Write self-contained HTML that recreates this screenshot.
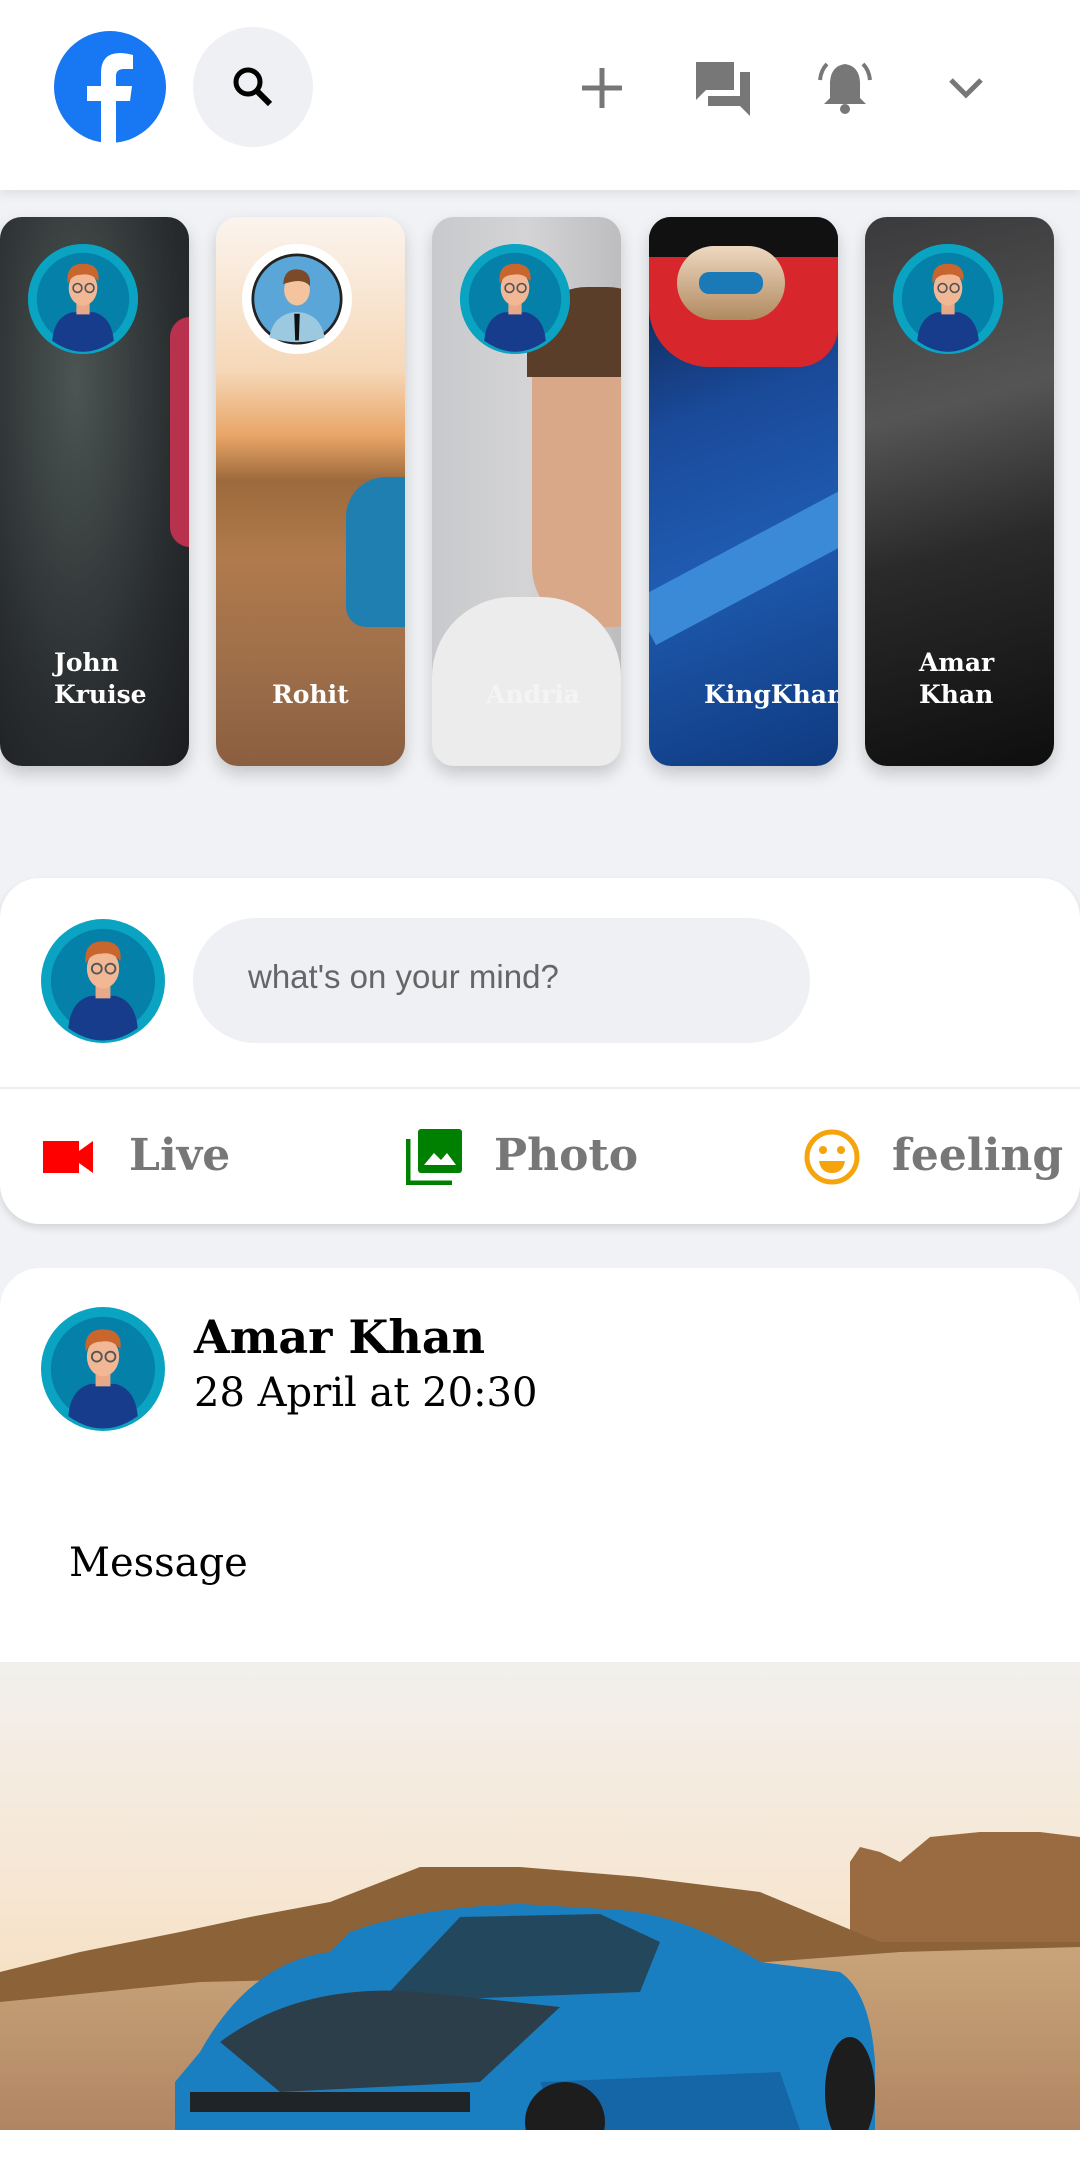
<!DOCTYPE html>
<html><head><meta charset="utf-8"><style>
*{margin:0;padding:0;box-sizing:border-box}
body{width:1080px;height:2130px;background:#f0f2f5;overflow:hidden;position:relative;font-family:"Liberation Serif","DejaVu Serif",serif}
.abs{position:absolute}
.header{left:0;top:0;width:1080px;height:190px;background:#fff;box-shadow:0 4px 10px rgba(0,0,0,.08)}
.story{top:217px;width:189px;height:549px;border-radius:22px;overflow:hidden;box-shadow:0 8px 16px rgba(0,0,0,.18)}
.sav{position:absolute;left:28px;top:27px;width:110px;height:110px;border-radius:50%;background:#0aa3c2;overflow:hidden}
.name{position:absolute;left:54px;color:#fff;font-weight:bold;font-size:28px;line-height:32px;font-family:"DejaVu Serif","Liberation Serif",serif;font-size:25px}
.card{left:0;width:1080px;background:#fff;border-radius:40px 40px 40px 40px}
.act{position:absolute;top:1130px;font-weight:bold;color:#777;font-size:44px;font-family:"DejaVu Serif",serif}
</style></head><body>
<svg width="0" height="0" style="position:absolute"><defs>
<g id="av">
<circle cx="50" cy="50" r="50" fill="#0aa3c2"/>
<circle cx="50" cy="50" r="42" fill="#0580a8"/>
<path d="M22 88 Q24 66 40 62 L60 62 Q76 66 78 88 Q64 98 50 98 Q36 98 22 88Z" fill="#173c8c"/>
<rect x="44" y="50" width="12" height="14" fill="#e8a988"/>
<ellipse cx="50" cy="40" rx="13" ry="16" fill="#f2b795"/>
<path d="M36 36 Q34 18 50 18 Q66 18 64 34 Q58 26 48 28 Q40 28 36 36Z" fill="#c9662e"/>
<circle cx="45" cy="40" r="4" fill="none" stroke="#555" stroke-width="1.5"/><circle cx="56" cy="40" r="4" fill="none" stroke="#555" stroke-width="1.5"/>
</g></defs></svg>

<div class="abs header">
 <svg class="abs" style="left:54px;top:31px" width="112" height="112" viewBox="0 0 112 112"><circle cx="56" cy="56" r="56" fill="#1877f2"/><path d="M62 112 V70 H76 L78 55 H62 V45 Q62 38 70 38 H79 V24 Q72 22 66 22 Q47 22 47 42 V55 H33 V70 H47 V112Z" fill="#fff"/></svg>
 <div class="abs" style="left:193px;top:27px;width:120px;height:120px;border-radius:50%;background:#eef0f3"></div>
 <svg class="abs" style="left:226px;top:60px" width="56" height="56" viewBox="0 0 56 56"><circle cx="22" cy="22" r="12" fill="none" stroke="#000" stroke-width="5"/><path d="M31 31 L44 44" stroke="#000" stroke-width="6"/></svg>
 <svg class="abs" style="left:580px;top:66px" width="44" height="44"><path d="M22 2V42M2 22H42" stroke="#777" stroke-width="5"/></svg>
 <svg class="abs" style="left:694px;top:60px" width="60" height="58" viewBox="0 0 60 58"><path d="M2 2H40V30H12L2 40Z" fill="#777"/><path d="M46 12H56V56L46 46H14V36H46Z" fill="#777"/></svg>
 <svg class="abs" style="left:815px;top:58px" width="60" height="60" viewBox="0 0 60 60"><path d="M30 6Q16 8 15 24V40L9 46H51L45 40V24Q44 8 30 6Z" fill="#777"/><circle cx="30" cy="51" r="5" fill="#777"/><path d="M12 6Q6 12 5 22M48 6Q54 12 55 22" stroke="#777" stroke-width="4" fill="none"/></svg>
 <svg class="abs" style="left:948px;top:76px" width="36" height="24"><path d="M3 4L18 19L33 4" stroke="#777" stroke-width="5" fill="none"/></svg>
</div>

<div class="abs story" style="left:0;background:radial-gradient(ellipse at 40% 30%,#4b5553,#2a2e30 60%,#1b1c1f)">
 <div class="abs" style="left:170px;top:100px;width:40px;height:230px;background:#b8324e;border-radius:30px"></div>
 <svg class="sav" viewBox="0 0 100 100"><use href="#av"/></svg>
 <div class="name" style="top:430px">John<br>Kruise</div>
</div>
<div class="abs story" style="left:216px;background:linear-gradient(180deg,#fbf4ee 0%,#f6d8b8 28%,#e8a466 40%,#9c6a3c 48%,#b07a4c 62%,#a0704a 80%,#8a5e40 100%)">
 <div class="abs" style="left:130px;top:260px;width:90px;height:150px;background:#1f7fb0;border-radius:40px 0 0 20px"></div>
 <div class="abs" style="left:26px;top:27px;width:110px;height:110px;border-radius:50%;background:#fff"></div>
 <svg class="abs" style="left:35px;top:36px" width="92" height="92" viewBox="0 0 100 100"><circle cx="50" cy="50" r="48" fill="#5aa6d8" stroke="#222" stroke-width="3"/><path d="M20 92Q24 66 50 64Q76 66 80 92Q50 102 20 92Z" fill="#9cc8e0"/><path d="M47 66H53L52 95H48Z" fill="#111"/><ellipse cx="50" cy="40" rx="14" ry="17" fill="#f3c49e"/><path d="M35 34Q36 16 52 18Q66 20 64 36Q56 26 35 34Z" fill="#7a4a2a"/></svg>
 <div class="name" style="top:462px;left:56px">Rohit</div>
</div>
<div class="abs story" style="left:432px;background:linear-gradient(90deg,#c8c9cc,#d4d4d6 50%,#bdbdbf)">
 <div class="abs" style="left:100px;top:90px;width:140px;height:320px;border-radius:60px;background:#d8a888"></div>
 <div class="abs" style="left:95px;top:70px;width:140px;height:90px;border-radius:60px 60px 0 0;background:#5a3e2a"></div>
 <div class="abs" style="left:0;top:380px;width:189px;height:170px;border-radius:80px 80px 0 0;background:#ececec"></div>
 <svg class="sav" viewBox="0 0 100 100"><use href="#av"/></svg>
 <div class="name" style="top:462px;left:54px;color:#f4f4f4">Andria</div>
</div>
<div class="abs story" style="left:649px;background:linear-gradient(160deg,#0a1a3a 0%,#1a4a9a 35%,#1f5bb0 60%,#0f3a80 100%)">
 <div class="abs" style="left:0;top:40px;width:189px;height:110px;background:#d8272c;border-radius:0 0 40px 60px"></div>
 <div class="abs" style="left:0;top:0;width:189px;height:40px;background:#111"></div>
 <div class="abs" style="left:-20px;top:320px;width:260px;height:50px;background:#3a8ad8;transform:rotate(-28deg)"></div>
 <div class="abs" style="left:28px;top:29px;width:108px;height:74px;border-radius:40px;background:linear-gradient(#eed8c0,#b08a60);overflow:hidden"><div class="abs" style="left:22px;top:26px;width:64px;height:22px;border-radius:10px;background:#1a7ab8"></div></div>
 <div class="name" style="top:462px;left:55px">KingKhan</div>
</div>
<div class="abs story" style="left:865px;background:linear-gradient(165deg,#3a3a3c 0%,#555 35%,#2a2a2a 60%,#0e0e0e 100%)">
 <svg class="sav" viewBox="0 0 100 100"><use href="#av"/></svg>
 <div class="name" style="top:430px;left:54px">Amar<br>Khan</div>
</div>

<div class="abs card" style="top:878px;height:346px;box-shadow:0 4px 8px rgba(0,0,0,.12)"></div>
<svg class="abs" style="left:41px;top:919px" width="124" height="124" viewBox="0 0 100 100"><use href="#av"/></svg>
<div class="abs" style="left:193px;top:918px;width:617px;height:125px;border-radius:63px;background:#eef0f3"></div>
<div class="abs" style="left:248px;top:958px;font-family:'Liberation Sans',sans-serif;font-size:33px;color:#666">what's on your mind?</div>
<div class="abs" style="left:0;top:1087px;width:1080px;height:2px;background:#eee"></div>
<svg class="abs" style="left:43px;top:1141px" width="52" height="32"><path d="M0 0H36V32H0Z" fill="#f00"/><path d="M36 10L50 0V32L36 22Z" fill="#f00"/></svg>
<div class="act" style="left:129px">Live</div>
<svg class="abs" style="left:406px;top:1129px" width="56" height="56" viewBox="0 0 56 56"><rect x="12" y="0" width="44" height="44" rx="3" fill="#008000"/><path d="M2 10V54H46" stroke="#008000" stroke-width="5" fill="none"/><path d="M18 36L28 24L35 31L41 24L50 36Z" fill="#fff"/></svg>
<div class="act" style="left:494px">Photo</div>
<svg class="abs" style="left:803px;top:1128px" width="58" height="58" viewBox="0 0 58 58"><circle cx="29" cy="29" r="25" fill="none" stroke="#f5a40c" stroke-width="5"/><circle cx="20" cy="22" r="4" fill="#f5a40c"/><circle cx="38" cy="22" r="4" fill="#f5a40c"/><path d="M16 33H42Q40 45 29 45Q18 45 16 33Z" fill="#f5a40c"/></svg>
<div class="act" style="left:892px">feeling</div>

<div class="abs" style="left:0;top:1268px;width:1080px;height:900px;background:#fff;border-radius:40px 40px 0 0"></div>
<svg class="abs" style="left:41px;top:1307px" width="124" height="124" viewBox="0 0 100 100"><use href="#av"/></svg>
<div class="abs" style="left:194px;top:1310px;font-family:'DejaVu Serif',serif;font-weight:bold;font-size:46px;color:#000">Amar Khan</div>
<div class="abs" style="left:194px;top:1370px;font-family:'DejaVu Serif',serif;font-size:40px;color:#000">28 April at 20:30</div>
<div class="abs" style="left:69px;top:1540px;font-family:'DejaVu Serif',serif;font-size:40px;color:#000">Message</div>

<svg class="abs" style="left:0;top:1662px" width="1080" height="468" viewBox="0 0 1080 468">
<defs><linearGradient id="sky" x1="0" y1="0" x2="0" y2="1"><stop offset="0" stop-color="#f2f0ed"/><stop offset=".5" stop-color="#f6e6d2"/><stop offset="1" stop-color="#f5d6a8"/></linearGradient>
<linearGradient id="gr" x1="0" y1="0" x2="0" y2="1"><stop offset="0" stop-color="#c9a47a"/><stop offset="1" stop-color="#b08662"/></linearGradient></defs>
<rect width="1080" height="468" fill="url(#sky)"/>
<path d="M850 200L860 185L880 190L900 200L930 175L980 170L1040 170L1080 175V320H850Z" fill="#9a6a40"/>
<path d="M0 310L80 290L180 270L250 255L330 240L420 205L520 205L640 215L760 230L880 280L1080 280V468H0Z" fill="#8c6238"/>
<path d="M0 340L200 320L420 315L700 305L900 290L1080 285V468H0Z" fill="url(#gr)"/>
<path d="M200 390Q250 300 330 290L350 270Q420 245 520 242L620 248Q690 255 760 300L840 310Q870 330 875 400V468H175V420Z" fill="#1a7fc0"/>
<path d="M380 340L460 255L600 252L660 280L640 330Z" fill="#23485e"/>
<path d="M220 380Q300 320 420 330L560 345L480 420L280 430Z" fill="#2c3e4a"/>
<path d="M540 420L780 410L800 468H560Z" fill="#1566a6"/>
<ellipse cx="850" cy="430" rx="25" ry="55" fill="#1d1d1d"/>
<ellipse cx="565" cy="460" rx="40" ry="40" fill="#1d1d1d"/>
<path d="M190 430H470V450H190Z" fill="#1f2428"/>
</svg>
</body></html>
